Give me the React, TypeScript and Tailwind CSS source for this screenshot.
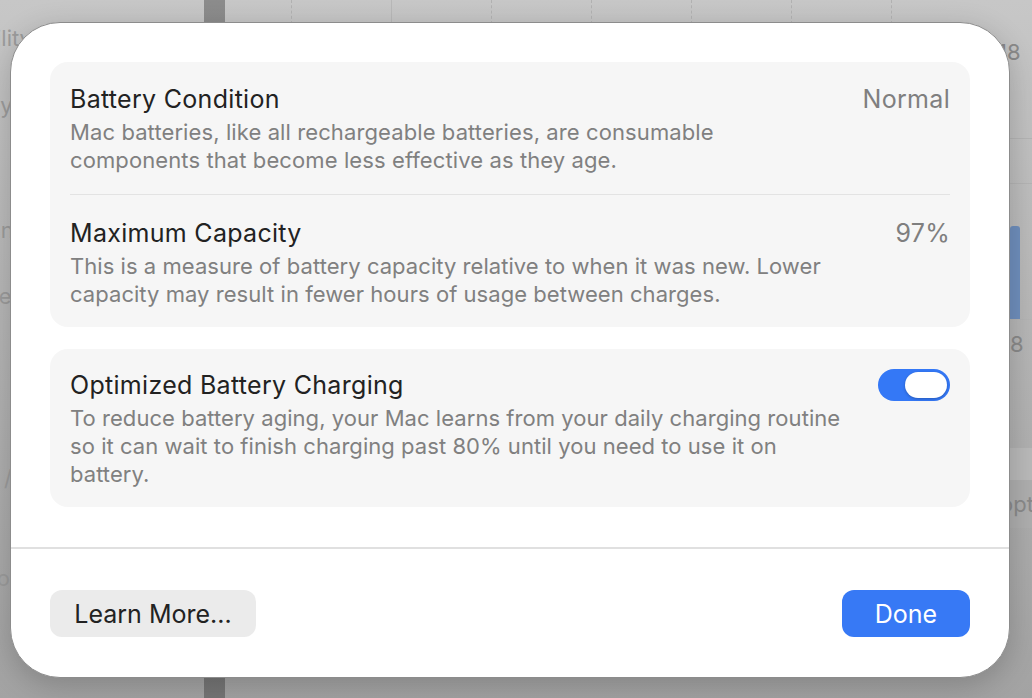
import { useState } from "react";

const font = { fontFamily: "Inter, 'Noto Sans', sans-serif" };

function Toggle({ on, onChange }: { on: boolean; onChange: () => void }) {
  return (
    <button
      type="button"
      onClick={onChange}
      className={`flex h-[32px] w-[72px] shrink-0 items-center rounded-full px-[3px] ${
        on ? "justify-end bg-[#3478f6]" : "justify-start bg-[#d9d9d9]"
      }`}
    >
      <span className="h-[26px] w-[42px] rounded-full bg-white shadow-[0_1px_3px_rgba(0,0,0,0.25)]" />
    </button>
  );
}

function Backdrop() {
  return (
    <div className="flex h-[698px] w-full bg-gradient-to-b from-[#c7c7c7] to-[#a3a3a3] text-[22px] leading-[28px] text-[#9c9c9c]">
      <div className="w-[204px] overflow-hidden">
        <div className="flex w-[32px] flex-col items-end whitespace-nowrap">
          <span className="mt-[24px]">Availability</span>
          <span className="mt-[39px]">Recovery o</span>
          <span className="mt-[97px]">Panel</span>
          <span className="mt-[38px]">Time &amp;</span>
          <span className="mt-[154px] pr-[20px]">Disk /</span>
          <span className="mt-[72px] pr-[22px]">Info o</span>
        </div>
      </div>
      <div className="w-[21px] bg-gradient-to-b from-[#8c8c8c] to-[#767676]" />
      <div className="flex flex-1">
        <div className="flex h-[40px] flex-1 pl-[66px]">
          <div className="w-[100px] border-l border-dashed border-[#b2b2b2]" />
          <div className="w-[100px] border-l border-[#b8b8b8]" />
          <div className="w-[100px] border-l border-dashed border-[#b2b2b2]" />
          <div className="w-[100px] border-l border-dashed border-[#b2b2b2]" />
          <div className="w-[100px] border-l border-dashed border-[#b2b2b2]" />
          <div className="w-[100px] border-l border-dashed border-[#b2b2b2]" />
          <div className="w-[100px] border-l border-dashed border-[#b2b2b2]" />
        </div>
        <div className="flex w-[40px] flex-col">
          <span className="mt-[38px] pl-[6px] text-[#8a8a8a]">18</span>
          <div className="mt-[72px] h-px bg-[#b4b4b4]" />
          <div className="mt-[44px] h-px bg-[#b4b4b4]" />
          <div className="mt-[42px] ml-[18px] h-[93px] w-[10px] rounded-t-[3px] bg-[#6f8fbd]" />
          <div className="h-px bg-[#b4b4b4]" />
          <span className="mt-[10px] pl-[18px] text-[#8a8a8a]">8</span>
          <div className="mt-[90px] h-[32px] bg-[#b9b9b9]" />
          <div className="flex h-[48px] items-center overflow-hidden bg-[#aeaeae] text-[#8a8a8a]">
            <span className="whitespace-nowrap pl-[8px]">opti</span>
          </div>
        </div>
      </div>
    </div>
  );
}

export default function App() {
  const [optimized, setOptimized] = useState(true);

  return (
    <div className="relative h-[698px] w-[1032px] overflow-hidden" style={font}>
      <Backdrop />

      <div className="absolute inset-0 pl-[10px] pt-[22px]">
        <div className="flex h-[656px] w-[1000px] flex-col rounded-[50px] border border-[#8c8c8c] bg-white shadow-[0_8px_30px_rgba(0,0,0,0.2)]">
          <div className="flex flex-col gap-[22px] px-[39px] pt-[39px]">
            <div className="rounded-[18px] bg-[#f6f6f6] px-[20px]">
              <div className="pt-[22px] pb-[20px]">
                <div className="flex items-start justify-between">
                  <div className="text-[25px] leading-[30px] tracking-[0.3px] text-[#222222]">Battery Condition</div>
                  <div className="text-[25px] leading-[30px] tracking-[0.3px] text-[#7f7f7f]">Normal</div>
                </div>
                <p className="mt-[4px] text-[22px] leading-[28px] tracking-[0.1px] text-[#808080]">
                  Mac batteries, like all rechargeable batteries, are consumable
                  <br />
                  components that become less effective as they age.
                </p>
              </div>
              <div className="h-px bg-[#e3e3e3]" />
              <div className="pt-[23px] pb-[19px]">
                <div className="flex items-start justify-between">
                  <div className="text-[25px] leading-[30px] tracking-[0.3px] text-[#222222]">Maximum Capacity</div>
                  <div className="text-[25px] leading-[30px] tracking-[0.3px] text-[#7f7f7f]">97%</div>
                </div>
                <p className="mt-[4px] text-[22px] leading-[28px] tracking-[0.05px] text-[#808080]">
                  This is a measure of battery capacity relative to when it was new. Lower
                  <br />
                  capacity may result in fewer hours of usage between charges.
                </p>
              </div>
            </div>

            <div className="flex items-start justify-between rounded-[18px] bg-[#f6f6f6] px-[20px] pt-[21px] pb-[19px]">
              <div>
                <div className="text-[25px] leading-[30px] tracking-[0.3px] text-[#222222]">
                  Optimized Battery Charging
                </div>
                <p className="mt-[4px] text-[22px] leading-[28px] tracking-[0.05px] text-[#808080]">
                  To reduce battery aging, your Mac learns from your daily charging routine
                  <br />
                  so it can wait to finish charging past 80% until you need to use it on
                  <br />
                  battery.
                </p>
              </div>
              <div className="-mt-[1px]">
                <Toggle on={optimized} onChange={() => setOptimized(!optimized)} />
              </div>
            </div>
          </div>

          <div className="mt-[40px] h-[1.5px] bg-[#e0e0e0]" />

          <div className="flex items-center justify-between px-[39px] pt-[41px]">
            <button
              type="button"
              className="h-[47px] w-[206px] rounded-[12px] bg-[#ebebeb] pt-[3px] text-[25px] text-[#222222]"
            >
              Learn More...
            </button>
            <button
              type="button"
              className="h-[47px] w-[128px] rounded-[12px] bg-[#3779f5] pt-[3px] text-[25px] text-white"
            >
              Done
            </button>
          </div>
        </div>
      </div>
    </div>
  );
}
